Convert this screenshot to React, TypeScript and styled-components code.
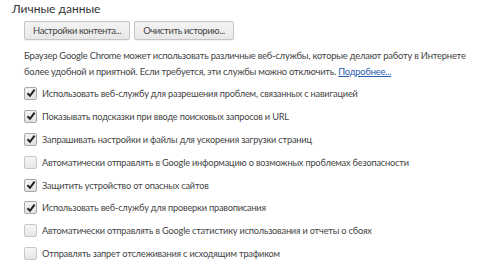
import styled, { createGlobalStyle } from "styled-components";

const GlobalStyle = createGlobalStyle`
  body {
    margin: 0;
    background: #ffffff;
    font-family: Lato, "Open Sans", sans-serif;
    color: #444;
  }
`;

const Page = styled.div`
  width: 480px;
  height: 268px;
  overflow: hidden;
  padding: 1px 0 0 12px;
  box-sizing: border-box;
`;

const Title = styled.h3`
  margin: 0;
  font-size: 12px;
  font-weight: 400;
  line-height: 16px;
  color: #333;
`;

const Section = styled.div`
  padding-left: 12px;
  display: flex;
  flex-direction: column;
`;

const Buttons = styled.div`
  display: flex;
  gap: 4px;
  margin-top: 4px;
`;

const Button = styled.button`
  height: 19px;
  padding: 0 8px;
  font-family: inherit;
  font-size: 9.4px;
  letter-spacing: -0.35px;
  color: #444;
  border: 1px solid #c4c4c4;
  border-radius: 2px;
  background: linear-gradient(#f3f3f3, #e8e8e8);
  box-shadow: 0 1px 0 rgba(0, 0, 0, 0.06);
  line-height: 17px;
`;

const Paragraph = styled.p`
  margin: 8px 0 2px;
  font-size: 9.4px;
  letter-spacing: -0.22px;
  line-height: 16px;
  color: #444;
  width: 444px;
`;

const Link = styled.a`
  color: #2a5db0;
  text-decoration: underline;
`;

const Row = styled.label`
  display: flex;
  align-items: center;
  gap: 5px;
  height: 22.9px;
  font-size: 9.2px;
  letter-spacing: -0.18px;
  color: #444;
  white-space: nowrap;
`;

const Box = styled.span<{ $checked: boolean }>`
  width: 11px;
  height: 11px;
  border: 1px solid ${(p) => (p.$checked ? "#a8a8a8" : "#c8c8c8")};
  border-radius: 2px;
  background: ${(p) =>
    p.$checked ? "linear-gradient(#f2f2f2, #e2e2e2)" : "linear-gradient(#f6f6f6, #e6e6e6)"};
  display: flex;
  align-items: center;
  justify-content: center;
  flex-shrink: 0;
`;

const items: [boolean, string][] = [
  [true, "Использовать веб-службу для разрешения проблем, связанных с навигацией"],
  [true, "Показывать подсказки при вводе поисковых запросов и URL"],
  [true, "Запрашивать настройки и файлы для ускорения загрузки страниц"],
  [false, "Автоматически отправлять в Google информацию о возможных проблемах безопасности"],
  [true, "Защитить устройство от опасных сайтов"],
  [true, "Использовать веб-службу для проверки правописания"],
  [false, "Автоматически отправлять в Google статистику использования и отчеты о сбоях"],
  [false, "Отправлять запрет отслеживания с исходящим трафиком"],
];

function Check() {
  return (
    <svg width="10" height="10" viewBox="0 0 10 10">
      <path d="M1.5 5.2 L4 7.8 L8.6 1.6" fill="none" stroke="#222" strokeWidth="2" />
    </svg>
  );
}

export default function App() {
  return (
    <Page>
      <GlobalStyle />
      <Title>Личные данные</Title>
      <Section>
        <Buttons>
          <Button>Настройки контента...</Button>
          <Button>Очистить историю...</Button>
        </Buttons>
        <Paragraph>
          Браузер Google Chrome может использовать различные веб-службы, которые делают работу в
          Интернете более удобной и приятной. Если требуется, эти службы можно отключить.{" "}
          <Link href="#">Подробнее...</Link>
        </Paragraph>
        {items.map(([checked, text]) => (
          <Row key={text}>
            <Box $checked={checked}>{checked && <Check />}</Box>
            {text}
          </Row>
        ))}
      </Section>
    </Page>
  );
}
